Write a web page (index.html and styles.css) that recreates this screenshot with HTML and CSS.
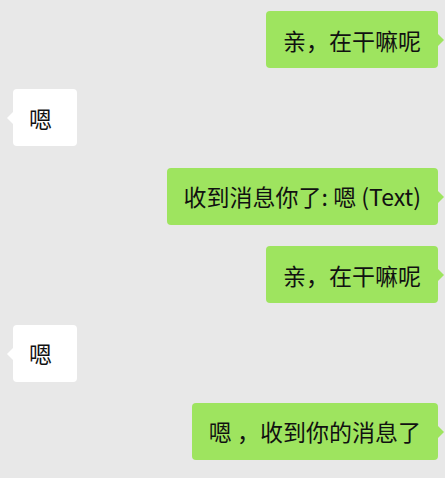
FILE: index.html
```html
<!DOCTYPE html>
<html lang="zh-CN">
<head>
    <meta charset="UTF-8">
    <meta name="viewport" content="width=device-width, initial-scale=1.0">
    <title>聊天</title>
    <link rel="stylesheet" href="styles.css">
</head>
<body>
    <div class="chat">
        <div class="row me"><div class="bubble">亲，在干嘛呢</div></div>
        <div class="row other"><div class="bubble">嗯</div></div>
        <div class="row me"><div class="bubble">收到消息你了: 嗯 (Text)</div></div>
        <div class="row me"><div class="bubble">亲，在干嘛呢</div></div>
        <div class="row other"><div class="bubble">嗯</div></div>
        <div class="row me"><div class="bubble">嗯 ，收到你的消息了</div></div>
    </div>
</body>
</html>
```

FILE: styles.css
```css
body {
    margin: 0;
    padding: 0;
    background: #e8e8e8;
    font-family: "Noto Sans CJK SC", "Noto Sans", sans-serif;
    color: #111;
}
.chat {
    display: flex;
    flex-direction: column;
    gap: 21.4px;
    padding: 11px 7px 0 13px;
}
.row {
    display: flex;
}
.row.me {
    justify-content: flex-end;
}
.row.other {
    justify-content: flex-start;
}
.bubble {
    position: relative;
    height: 57px;
    box-sizing: border-box;
    padding: 0 16px;
    display: flex;
    align-items: center;
    font-size: 23px;
    border-radius: 4px;
    white-space: nowrap;
}
.me .bubble {
    background: #9ee45f;
    padding: 0 17px;
}
.other .bubble {
    background: #ffffff;
    width: 64px;
}
.bubble::after {
    content: "";
    position: absolute;
    top: 22px;
    border: 7px solid transparent;
}
.me .bubble::after {
    right: -13px;
    border-left-color: #9ee45f;
}
.other .bubble::after {
    left: -13px;
    border-right-color: #ffffff;
}
```
